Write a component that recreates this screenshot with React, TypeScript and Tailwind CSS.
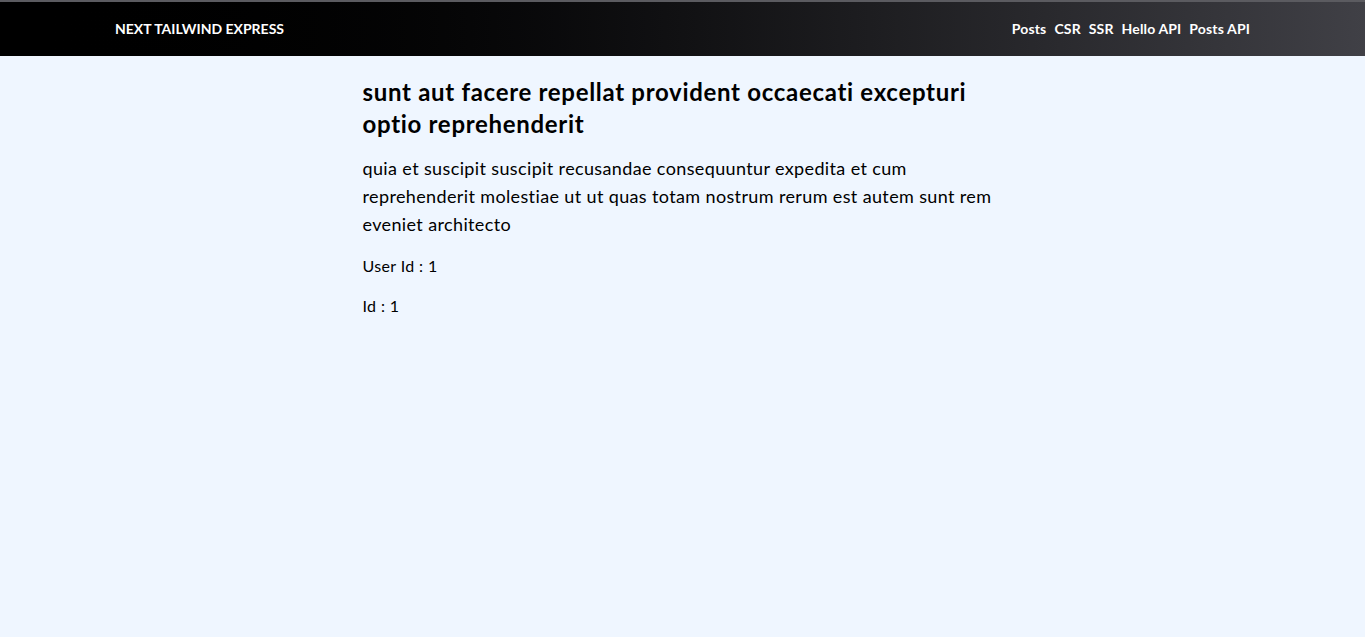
import React from 'react';

const links = ['Posts', 'CSR', 'SSR', 'Hello API', 'Posts API'];

const post = {
  userId: 1,
  id: 1,
  title: 'sunt aut facere repellat provident occaecati excepturi optio reprehenderit',
  body: 'quia et suscipit suscipit recusandae consequuntur expedita et cum reprehenderit molestiae ut ut quas totam nostrum rerum est autem sunt rem eveniet architecto',
};

function Header() {
  return (
    <header className="h-14 border-t-2 border-[#5b5b60] bg-gradient-to-r from-black via-[#111113] to-[#404046]">
      <nav className="flex h-full items-center justify-between px-[115px] text-sm font-bold text-white">
        <span>NEXT TAILWIND EXPRESS</span>
        <ul className="flex gap-2 tracking-[0.01em]">
          {links.map((l) => (
            <li key={l}>
              <a href="#">{l}</a>
            </li>
          ))}
        </ul>
      </nav>
    </header>
  );
}

export default function App() {
  return (
    <div className="min-h-screen bg-[#eff6ff] font-['Lato','Liberation_Sans',sans-serif] text-black">
      <Header />
      <main className="mx-auto max-w-[640px] pt-5 tracking-[0.023em]">
        <h1 className="mb-3.5 text-2xl leading-8 font-bold tracking-[0.029em]">{post.title}</h1>
        <p className="mb-4 text-lg leading-7">{post.body}</p>
        <p className="mb-4">User Id : {post.userId}</p>
        <p>Id : {post.id}</p>
      </main>
    </div>
  );
}
